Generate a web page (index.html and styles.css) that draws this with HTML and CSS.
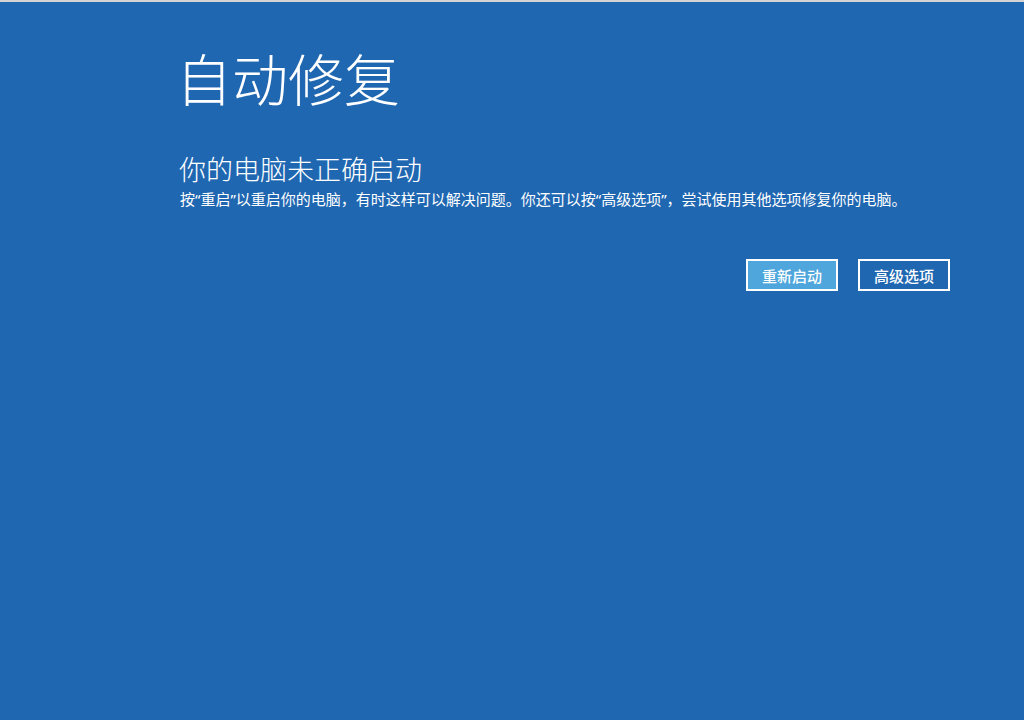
FILE: index.html
```html
<!DOCTYPE html>
<html lang="zh-CN">
<head>
  <meta charset="UTF-8" />
  <meta name="viewport" content="width=device-width, initial-scale=1" />
  <title>自动修复</title>
  <link rel="stylesheet" href="styles.css">
</head>
<body>
  <div class="tela">
    <h1 class="titulo">自动修复</h1>

    <h2 class="subtitulo">你的电脑未正确启动</h2>
    <p class="texto">按“重启”以重启你的电脑，有时这样可以解决问题。你还可以按“高级选项”，尝试使用其他选项修复你的电脑。</p>

    <div class="botoes">
      <button class="botao ativo">重新启动</button>
      <button class="botao">高级选项</button>
    </div>
  </div>
</body>
</html>
```

FILE: styles.css
```css
:root {
  --azul: #2067b2;
  --azul-claro: #4ea6dc;
  --branco: #ffffff;
  --borda-topo: #d4d4d4;
}

html, body {
  margin: 0;
  height: 100%;
}

body {
  font-family: "Noto Sans CJK SC", "Noto Sans", sans-serif;
  background: var(--azul);
  color: var(--branco);
  border-top: 2px solid var(--borda-topo);
  box-sizing: border-box;
  overflow: hidden;
}

.tela {
  padding: 37px 74px 0 176px;
}

.titulo {
  font-size: 56px;
  font-weight: 300;
  line-height: 76px;
  margin: 0 0 36px;
}

.subtitulo {
  font-size: 27px;
  font-weight: 300;
  line-height: 36px;
  margin: 0 0 0 3px;
}

/* aspas estreitas vêm da fonte latina, o resto cai na CJK */
.texto {
  font-family: "Noto Sans", "Noto Sans CJK SC", sans-serif;
  font-size: 15px;
  font-weight: 400;
  line-height: 20px;
  margin: 2px 0 0 4px;
}

.botoes {
  display: flex;
  justify-content: flex-end;
  gap: 20px;
  margin-top: 50px;
}

.botao {
  width: 92px;
  height: 32px;
  border: 2px solid var(--branco);
  background: transparent;
  color: var(--branco);
  font-family: inherit;
  font-size: 15px;
  font-weight: 500;
  padding: 0;
  cursor: pointer;
}

.botao.ativo {
  background: var(--azul-claro);
}
```
